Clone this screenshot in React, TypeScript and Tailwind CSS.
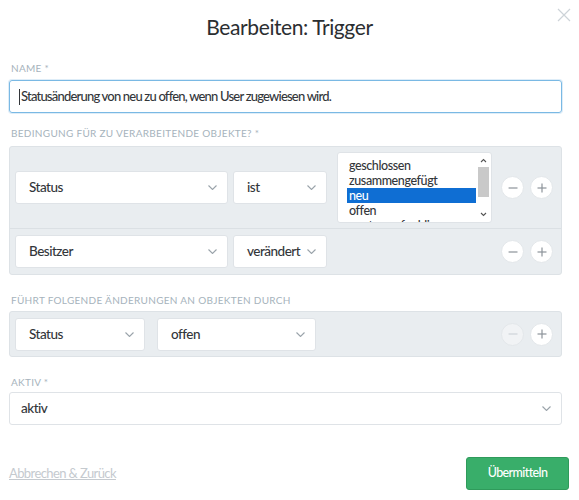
import React from "react";

const FONT = "Lato, 'Liberation Sans', sans-serif";

const Chevron = () => (
  <svg width="9" height="5" viewBox="0 0 9 5" className="shrink-0">
    <path d="M0.5 0.5 L4.5 4.5 L8.5 0.5" fill="none" stroke="#9aa3aa" strokeWidth="1.1" />
  </svg>
);

function Select({ label, w, className = "" }: { label: string; w: string; className?: string }) {
  return (
    <div
      className={`${w} h-[33px] bg-white border border-[#dfe3e7] rounded-[3px] flex items-center justify-between pl-[13px] pr-[10px] text-[13.5px] font-medium tracking-[-0.5px] text-[#33363a] ${className}`}
    >
      <span>{label}</span>
      <Chevron />
    </div>
  );
}

function RoundBtn({ kind, disabled = false }: { kind: "minus" | "plus"; disabled?: boolean }) {
  return (
    <div
      className={`w-[23px] h-[23px] rounded-full border border-[#e3e7ea] flex items-center justify-center ${
        disabled ? "bg-[#f1f3f5]" : "bg-white"
      }`}
    >
      <svg width="10" height="10" viewBox="0 0 10 10">
        <path d="M0.5 5 H9.5" stroke={disabled ? "#cfd4d8" : "#8c9399"} strokeWidth="1.2" />
        {kind === "plus" && <path d="M5 0.5 V9.5" stroke="#8c9399" strokeWidth="1.2" />}
      </svg>
    </div>
  );
}

const Label = ({ children, className = "" }: { children: React.ReactNode; className?: string }) => (
  <div className={`text-[10px] leading-[12px] tracking-[0.3px] text-[#a6b3bc] pl-[2px] ${className}`}>{children}</div>
);

export default function App() {
  const options = ["geschlossen", "zusammengefügt", "neu", "offen", "warten auf schliessen"];
  return (
    <div className="w-[579px] h-[500px] bg-white relative" style={{ fontFamily: FONT }}>
      <div className="absolute right-[8px] top-[8px]">
        <svg width="14" height="14" viewBox="0 0 14 14">
          <path d="M1 1 L13 13 M13 1 L1 13" stroke="#cdd3d8" strokeWidth="1.2" />
        </svg>
      </div>
      <div className="pt-[13px] text-center text-[21px] tracking-[-0.4px] leading-[28px] text-[#2b2e31]">Bearbeiten: Trigger</div>

      <div className="px-[9px] pr-[17px]">
        <Label className="mt-[21px]">NAME *</Label>
        <div className="mt-[6px] h-[33px] border border-[#7ab9e4] rounded-[3px] shadow-[0_0_0_1px_rgba(122,185,228,0.25)] flex items-center pl-[9px] text-[13px] font-medium tracking-[-0.8px] text-[#33363a]">
          <span className="w-px h-[16px] bg-[#33363a] mr-[1px]"></span>
          Statusänderung von neu zu offen, wenn User zugewiesen wird.
        </div>

        <Label className="mt-[14px]">BEDINGUNG FÜR ZU VERARBEITENDE OBJEKTE? *</Label>
        <div className="mt-[7px] bg-[#e9edf0] border border-[#dde2e6] rounded-[3px]">
          <div className="flex items-center pl-[5px] pr-[8px] h-[82px] border-b border-[#dbe0e4]">
            <Select label="Status" w="w-[213px]" />
            <Select label="ist" w="w-[94px]" className="ml-[5px]" />
            <div className="ml-[10px] w-[155px] h-[71px] bg-white border border-[#dfe3e7] rounded-[3px] flex pl-[9px] pr-[2px] overflow-hidden">
              <div className="flex-1 pt-[5px] text-[12.5px] font-medium tracking-[-0.4px] leading-[15px] text-[#33363a] overflow-hidden">
                {options.map((o) => (
                  <div
                    key={o}
                    className={`pl-[2px] h-[15px] whitespace-nowrap ${o === "neu" ? "bg-[#0f6ed3] text-white" : ""}`}
                  >
                    {o}
                  </div>
                ))}
              </div>
              <div className="w-[11px] ml-[2px] flex flex-col items-center">
                <svg width="7" height="5" viewBox="0 0 7 5" className="mt-[5px]">
                  <path d="M1 4 L3.5 1.5 L6 4" fill="none" stroke="#555" strokeWidth="1.1" />
                </svg>
                <div className="mt-[4px] w-[11px] h-[30px] bg-[#c9c9c9]"></div>
                <div className="flex-1" />
                <svg width="7" height="5" viewBox="0 0 7 5" className="mb-[5px]">
                  <path d="M1 1 L3.5 3.5 L6 1" fill="none" stroke="#555" strokeWidth="1.1" />
                </svg>
              </div>
            </div>
            <div className="ml-auto flex gap-[6px]">
              <RoundBtn kind="minus" />
              <RoundBtn kind="plus" />
            </div>
          </div>
          <div className="flex items-center pl-[5px] pr-[8px] h-[45px]">
            <Select label="Besitzer" w="w-[213px]" />
            <Select label="verändert" w="w-[94px]" className="ml-[5px] pl-[9px]" />
            <div className="ml-auto flex gap-[6px]">
              <RoundBtn kind="minus" />
              <RoundBtn kind="plus" />
            </div>
          </div>
        </div>

        <Label className="mt-[19px]">FÜHRT FOLGENDE ÄNDERUNGEN AN OBJEKTEN DURCH</Label>
        <div className="mt-[5px] bg-[#e9edf0] border border-[#dde2e6] rounded-[3px] h-[46px] flex items-center pl-[5px] pr-[8px]">
          <Select label="Status" w="w-[130px]" />
          <Select label="offen" w="w-[159px]" className="ml-[12px]" />
          <div className="ml-auto flex gap-[6px]">
            <RoundBtn kind="minus" disabled />
            <RoundBtn kind="plus" />
          </div>
        </div>

        <Label className="mt-[19px]">AKTIV *</Label>
        <div className="mt-[4px] h-[33px] bg-white border border-[#dfe3e7] rounded-[3px] flex items-center justify-between pl-[11px] pr-[10px] text-[13.5px] font-medium tracking-[-0.5px] text-[#33363a]">
          <span>aktiv</span>
          <Chevron />
        </div>
      </div>

      <div className="mt-[32px] flex items-center justify-between pl-[9px] pr-[10px]">
        <span className="text-[13px] tracking-[-0.6px] text-[#c5cacf] underline">Abbrechen &amp; Zurück</span>
        <button className="w-[103px] h-[33px] bg-[#39ae6a] border border-[#2f9b5b] rounded-[3px] text-white text-[12.5px] font-medium tracking-[-0.6px]">
          Übermitteln
        </button>
      </div>
    </div>
  );
}
